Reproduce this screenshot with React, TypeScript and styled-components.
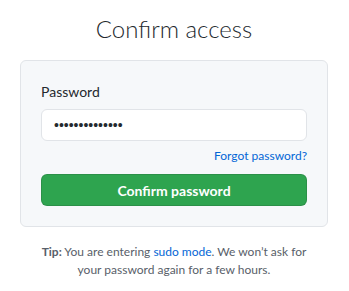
import React from "react";
import styled, { createGlobalStyle } from "styled-components";

const GlobalStyle = createGlobalStyle`
  body {
    margin: 0;
    background: #fff;
    font-family: Lato, "Liberation Sans", sans-serif;
    color: #24292e;
  }
`;

const PageStyled = styled.div`
  width: 308px;
  margin: 0 auto 0 20px;
  padding-top: 12px;
`;

const HeadingStyled = styled.h1`
  margin: 0 0 14px;
  font-size: 24px;
  font-weight: 300;
  line-height: 34px;
  text-align: center;
  color: #24292e;
`;

const BoxStyled = styled.div`
  background: #f6f8fa;
  border: 1px solid #e1e4e8;
  border-radius: 6px;
  padding: 20px;
  display: flex;
  flex-direction: column;
`;

const LabelStyled = styled.label`
  font-size: 14px;
  line-height: 21px;
  margin: 0 0 7px;
`;

const InputStyled = styled.input`
  box-sizing: border-box;
  height: 32px;
  padding: 5px 12px;
  font-size: 14px;
  border: 1px solid #e1e4e8;
  border-radius: 6px;
  background: #fff;
  color: #24292e;
  outline: none;
`;

const ForgotStyled = styled.a`
  align-self: flex-end;
  margin: 6px 0 9px;
  font-size: 12px;
  line-height: 18px;
  color: #0366d6;
  text-decoration: none;
`;

const ButtonStyled = styled.button`
  height: 32px;
  border: 1px solid rgba(27, 31, 35, 0.15);
  border-radius: 6px;
  background: #2ea44f;
  color: #fff;
  font-family: inherit;
  font-size: 14px;
  font-weight: 700;
  cursor: pointer;
`;

const TipStyled = styled.p`
  margin: 16px 0 0;
  padding: 0 16px;
  font-size: 12px;
  line-height: 18px;
  text-align: center;
  color: #586069;

  strong {
    font-weight: 700;
  }

  a {
    color: #0366d6;
    text-decoration: none;
  }
`;

const App = () => (
  <>
    <GlobalStyle />
    <PageStyled>
      <HeadingStyled>Confirm access</HeadingStyled>
      <BoxStyled>
        <LabelStyled htmlFor="password">Password</LabelStyled>
        <InputStyled
          id="password"
          type="password"
          defaultValue="secretpassword"
        />
        <ForgotStyled href="#">Forgot password?</ForgotStyled>
        <ButtonStyled type="button">Confirm password</ButtonStyled>
      </BoxStyled>
      <TipStyled>
        <strong>Tip:</strong> You are entering <a href="#">sudo mode</a>. We
        won’t ask for your password again for a few hours.
      </TipStyled>
    </PageStyled>
  </>
);

export default App;
